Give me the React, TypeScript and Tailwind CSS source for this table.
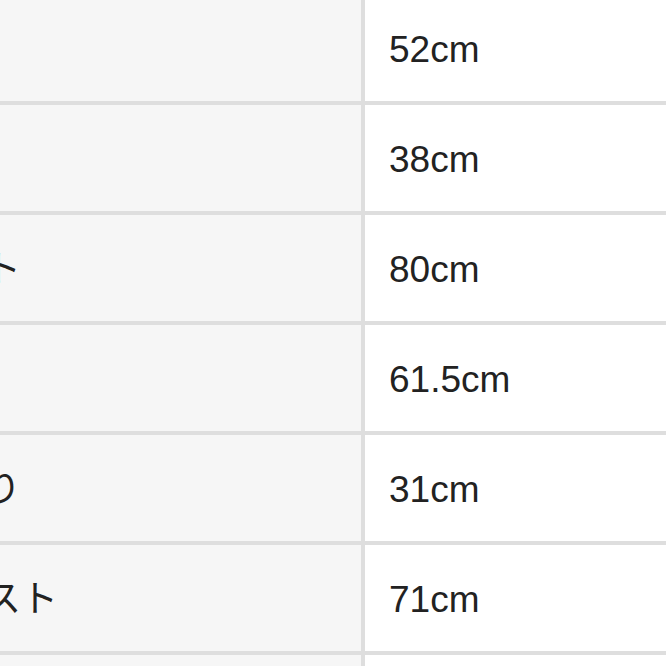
const rows = [
  { label: "着丈", value: "52cm" },
  { label: "肩幅", value: "38cm" },
  { label: "バスト", value: "80cm" },
  { label: "袖丈", value: "61.5cm" },
  { label: "袖ぐり", value: "31cm" },
  { label: "ウエスト", value: "71cm" },
  { label: "", value: "" },
];

export default function App() {
  return (
    <div className="w-[666px] h-[666px] overflow-hidden bg-white">
      <div
        className="-ml-[114px] -mt-[5px] grid grid-cols-[475px_1fr] gap-[4px] bg-[#dedede] text-[37px] text-[#222222]"
        style={{ fontFamily: '"Liberation Sans", "Noto Sans CJK JP", sans-serif' }}
      >
        {rows.map((row, i) => (
          <div key={i} className="contents">
            <div className="h-[106px] bg-[#f6f6f6] flex items-center pl-[24px] pt-[4px]">
              {row.label}
            </div>
            <div className="h-[106px] bg-white flex items-center pl-[24px] pt-[4px]">
              {row.value}
            </div>
          </div>
        ))}
      </div>
    </div>
  );
}
